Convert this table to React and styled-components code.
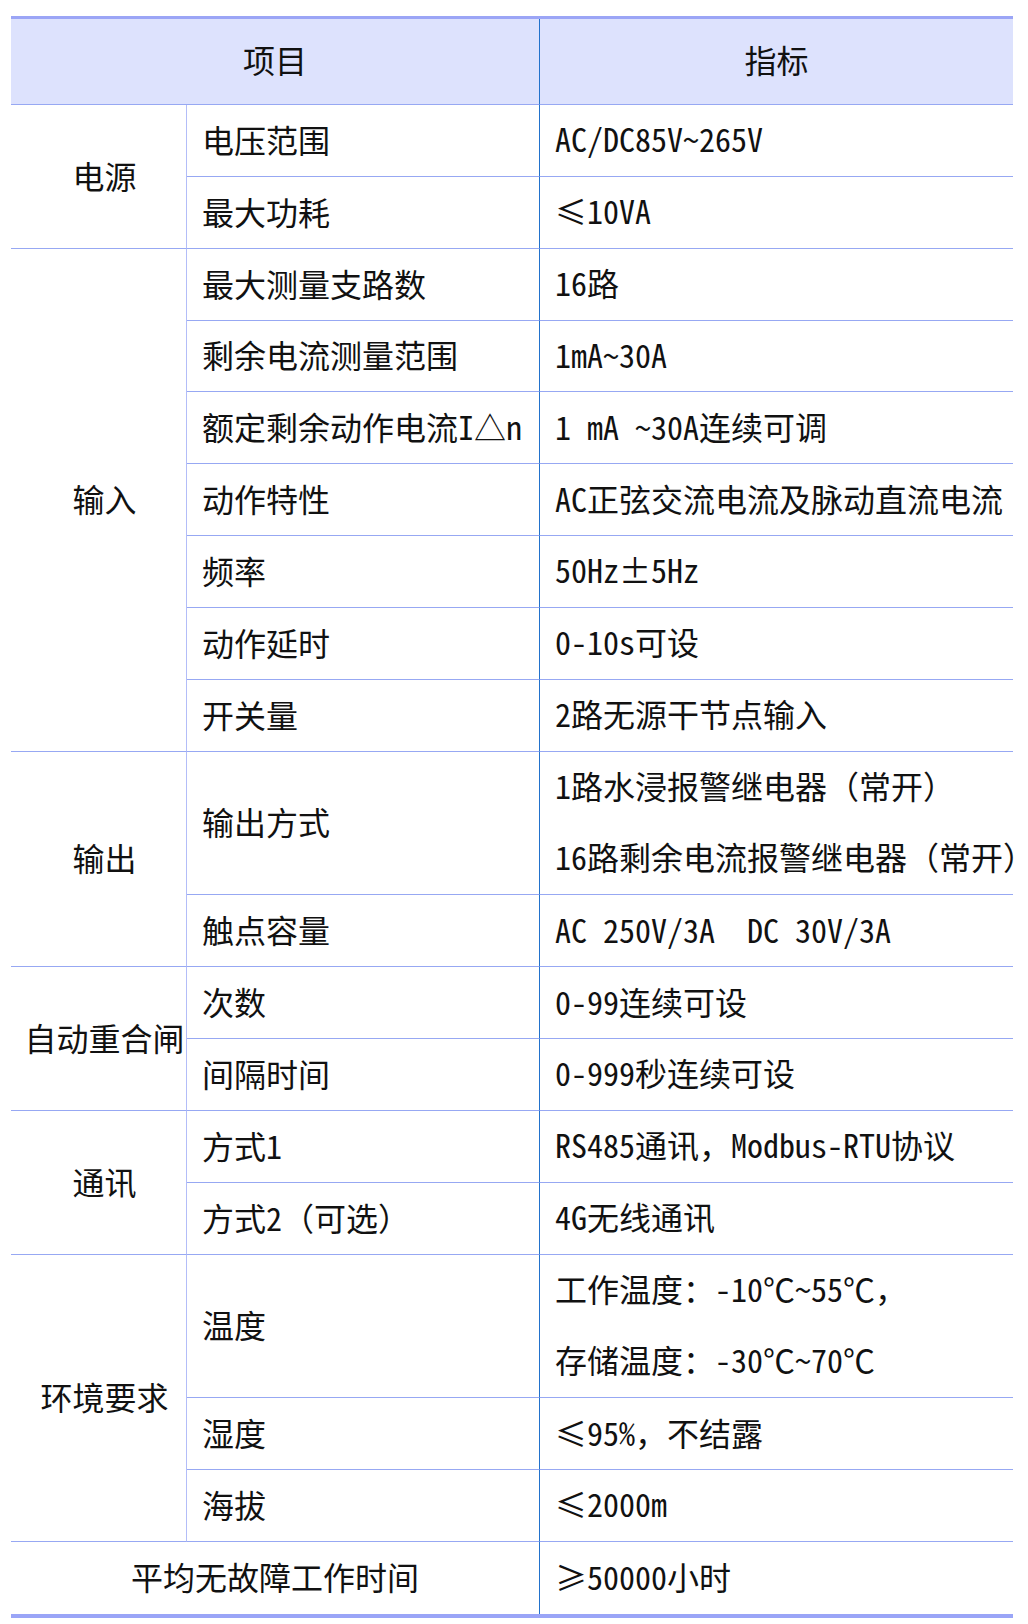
import React from 'react'
import styled, { createGlobalStyle } from 'styled-components'

const GlobalStyle = createGlobalStyle`
  html, body {
    margin: 0;
    padding: 0;
    background: #ffffff;
  }
  body {
    font-family: "Noto Sans Mono CJK SC", "Noto Sans CJK SC", sans-serif;
    color: #111;
  }
`

const LINE = '#97a8f3'
const SOFT = '#b3bdf8'
const DARK = '#2272cc'

const Sheet = styled.div`
  width: 1002px;
  margin: 16px 0 0 11px;
  display: grid;
  grid-template-columns: 176px 353px 473px;
  grid-template-rows: 86px;
  grid-auto-rows: 71.85px;
  border-top: 3px solid #9ba5f6;
  border-bottom: 4px solid #9aa5f7;
  font-size: 32px;
`

const HeadCell = styled.div`
  grid-column: ${p => p.$col};
  background: #dde2fd;
  border-bottom: 1px solid ${LINE};
  border-right: ${p => (p.$divider ? `1px solid ${DARK}` : 'none')};
  display: flex;
  align-items: center;
  justify-content: center;
  padding-bottom: 6px;
  box-sizing: border-box;
`

const GroupCell = styled.div`
  grid-column: ${p => (p.$wide ? '1 / 3' : '1')};
  grid-row: span ${p => p.$span || 1};
  border-bottom: ${p => (p.$last ? 'none' : `1px solid ${LINE}`)};
  border-right: 1px solid ${p => (p.$wide ? DARK : SOFT)};
  display: flex;
  align-items: center;
  justify-content: center;
  padding: 0 0 3px ${p => (p.$wide ? '0' : '12px')};
  white-space: nowrap;
  box-sizing: border-box;
`

const ItemCell = styled.div`
  grid-column: 2;
  grid-row: span ${p => p.$span || 1};
  border-bottom: 1px solid ${LINE};
  border-right: 1px solid ${DARK};
  display: flex;
  align-items: center;
  padding: 0 0 3px 15px;
  white-space: nowrap;
  box-sizing: border-box;
`

const ValueCell = styled.div`
  grid-column: 3;
  grid-row: span ${p => p.$span || 1};
  border-bottom: ${p => (p.$last ? 'none' : `1px solid ${LINE}`)};
  display: flex;
  flex-direction: column;
  justify-content: center;
  padding: 0 0 3px 15px;
  white-space: pre;
  box-sizing: border-box;
`

const Line = styled.span`
  display: block;
  line-height: 71px;
`

const groups = [
  {
    name: '电源',
    rows: [
      { item: '电压范围', value: ['AC/DC85V~265V'] },
      { item: '最大功耗', value: ['≤10VA'] },
    ],
  },
  {
    name: '输入',
    rows: [
      { item: '最大测量支路数', value: ['16路'] },
      { item: '剩余电流测量范围', value: ['1mA~30A'] },
      { item: '额定剩余动作电流I△n', value: ['1 mA ~30A连续可调'] },
      { item: '动作特性', value: ['AC正弦交流电流及脉动直流电流'] },
      { item: '频率', value: ['50Hz±5Hz'] },
      { item: '动作延时', value: ['0-10s可设'] },
      { item: '开关量', value: ['2路无源干节点输入'] },
    ],
  },
  {
    name: '输出',
    rows: [
      { item: '输出方式', value: ['1路水浸报警继电器（常开）', '16路剩余电流报警继电器（常开）'] },
      { item: '触点容量', value: ['AC 250V/3A  DC 30V/3A'] },
    ],
  },
  {
    name: '自动重合闸',
    rows: [
      { item: '次数', value: ['0-99连续可设'] },
      { item: '间隔时间', value: ['0-999秒连续可设'] },
    ],
  },
  {
    name: '通讯',
    rows: [
      { item: '方式1', value: ['RS485通讯，Modbus-RTU协议'] },
      { item: '方式2（可选）', value: ['4G无线通讯'] },
    ],
  },
  {
    name: '环境要求',
    rows: [
      { item: '温度', value: ['工作温度：-10℃~55℃，', '存储温度：-30℃~70℃'] },
      { item: '湿度', value: ['≤95%，不结露'] },
      { item: '海拔', value: ['≤2000m'] },
    ],
  },
]

export default function App() {
  return (
    <>
      <GlobalStyle />
      <Sheet>
        <HeadCell $col="1 / 3" $divider>项目</HeadCell>
        <HeadCell $col="3">指标</HeadCell>
        {groups.map(g => {
          const span = g.rows.reduce((n, r) => n + r.value.length, 0)
          return (
            <React.Fragment key={g.name}>
              <GroupCell $span={span}>{g.name}</GroupCell>
              {g.rows.map(r => (
                <React.Fragment key={r.item}>
                  <ItemCell $span={r.value.length}>{r.item}</ItemCell>
                  <ValueCell $span={r.value.length}>
                    {r.value.map(v => (
                      <Line key={v}>{v}</Line>
                    ))}
                  </ValueCell>
                </React.Fragment>
              ))}
            </React.Fragment>
          )
        })}
        <GroupCell $wide $last>平均无故障工作时间</GroupCell>
        <ValueCell $last>
          <Line>≥50000小时</Line>
        </ValueCell>
      </Sheet>
    </>
  )
}
